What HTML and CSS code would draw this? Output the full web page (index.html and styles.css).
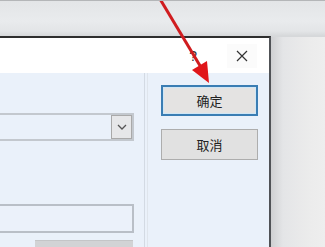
FILE: index.html
```html
<!DOCTYPE html>
<html lang="zh-CN">
<head>
    <meta charset="UTF-8">
    <meta name="viewport" content="width=device-width, initial-scale=1.0">
    <title>确定</title>
    <link rel="stylesheet" href="styles.css">
</head>
<body>
    <div class="screen">
        <div class="dialog">
            <div class="title-bar">
                <span class="help">?</span>
                <span class="close">
                    <svg width="12" height="12" viewBox="0 0 12 12">
                        <path d="M1 1 L11 11 M11 1 L1 11" stroke="#333" stroke-width="1.2" fill="none"/>
                    </svg>
                </span>
            </div>
            <div class="dialog-body">
                <div class="left-panel">
                    <div class="combo">
                        <span class="combo-btn">
                            <svg width="10" height="6" viewBox="0 0 10 6">
                                <path d="M1 1 L5 5 L9 1" stroke="#555" stroke-width="1.3" fill="none"/>
                            </svg>
                        </span>
                    </div>
                    <div class="text-box"></div>
                    <div class="grey-btn"></div>
                </div>
                <div class="right-panel">
                    <button class="btn btn-default">确定</button>
                    <button class="btn">取消</button>
                </div>
            </div>
        </div>

        <svg class="arrow" width="325" height="247" viewBox="0 0 325 247">
            <line x1="160" y1="-2" x2="202" y2="68" stroke="#d01c1f" stroke-width="3"/>
            <polygon points="209,82 192,69 207,60" fill="#e0161a"/>
        </svg>
    </div>
</body>
</html>
```

FILE: styles.css
```css
html, body {
    margin: 0;
    padding: 0;
}
body {
    font-family: "Noto Sans CJK SC", "Noto Sans", sans-serif;
    width: 325px;
    height: 247px;
    overflow: hidden;
}
.screen {
    position: relative;
    height: 247px;
    box-sizing: border-box;
    padding-top: 35px;
    border-top: 1px solid #b4b6b8;
    background: linear-gradient(to bottom, #e3e5e7 0, #e9ebed 20px, #e3e5e7 30px, #d6d8da 35px);
    overflow: hidden;
}
.screen::after {
    content: "";
    position: absolute;
    left: 271px;
    top: 36px;
    right: 0;
    bottom: 0;
    background: linear-gradient(to right, #cfd0d2 0, #e4e5e7 12px, #ececec 40px, #eeeeee 100%);
}
.dialog {
    width: 269px;
    height: 220px;
    border-top: 2px solid #2e2e2e;
    border-right: 2px solid #505256;
    background: #eaf1fa;
}
.title-bar {
    height: 35px;
    background: #ffffff;
    display: flex;
    align-items: center;
    justify-content: flex-end;
}
.help {
    font-family: "Liberation Sans", sans-serif;
    font-size: 14px;
    color: #333;
    margin-right: 30px;
}
.close {
    display: flex;
    align-items: center;
    justify-content: center;
    width: 30px;
    height: 24px;
    margin-right: 12px;
    background: #fbfbfb;
}
.dialog-body {
    display: flex;
    height: 185px;
}
.left-panel {
    width: 145px;
    border-right: 1px solid #d3dae3;
    padding-top: 40px;
    box-sizing: border-box;
}
.combo {
    width: 134px;
    height: 28px;
    box-sizing: border-box;
    border: 2px solid #c3c8ce;
    border-left: none;
    display: flex;
    justify-content: flex-end;
}
.combo-btn {
    width: 21px;
    height: 24px;
    box-sizing: border-box;
    border: 1px solid #a9a9a9;
    background: #e6e7e9;
    display: flex;
    align-items: center;
    justify-content: center;
}
.text-box {
    width: 134px;
    height: 29px;
    box-sizing: border-box;
    margin-top: 63px;
    border: 2px solid #b9bfc7;
    border-left: none;
    background: #ebf1fa;
}
.grey-btn {
    width: 98px;
    height: 14px;
    margin-top: 7px;
    margin-left: 35px;
    background: #d2d3d5;
    border-top: 1px solid #c4c5c7;
}
.right-panel {
    margin-left: 2px;
    border-left: 1px solid #dfe5ec;
    padding-left: 13px;
    padding-top: 12px;
    display: flex;
    flex-direction: column;
    gap: 13px;
}
.btn {
    width: 97px;
    height: 31px;
    box-sizing: border-box;
    font-family: "Noto Sans CJK SC", sans-serif;
    font-size: 13px;
    color: #222;
    background: #e1e1e1;
    border: 1px solid #adadad;
    padding: 0;
}
.btn-default {
    border: 2px solid #3a7db3;
    box-shadow: inset 0 0 0 1px #cfe6f5;
    background: #e4e3e2;
}
.arrow {
    position: absolute;
    left: 0;
    top: 0;
}
```
